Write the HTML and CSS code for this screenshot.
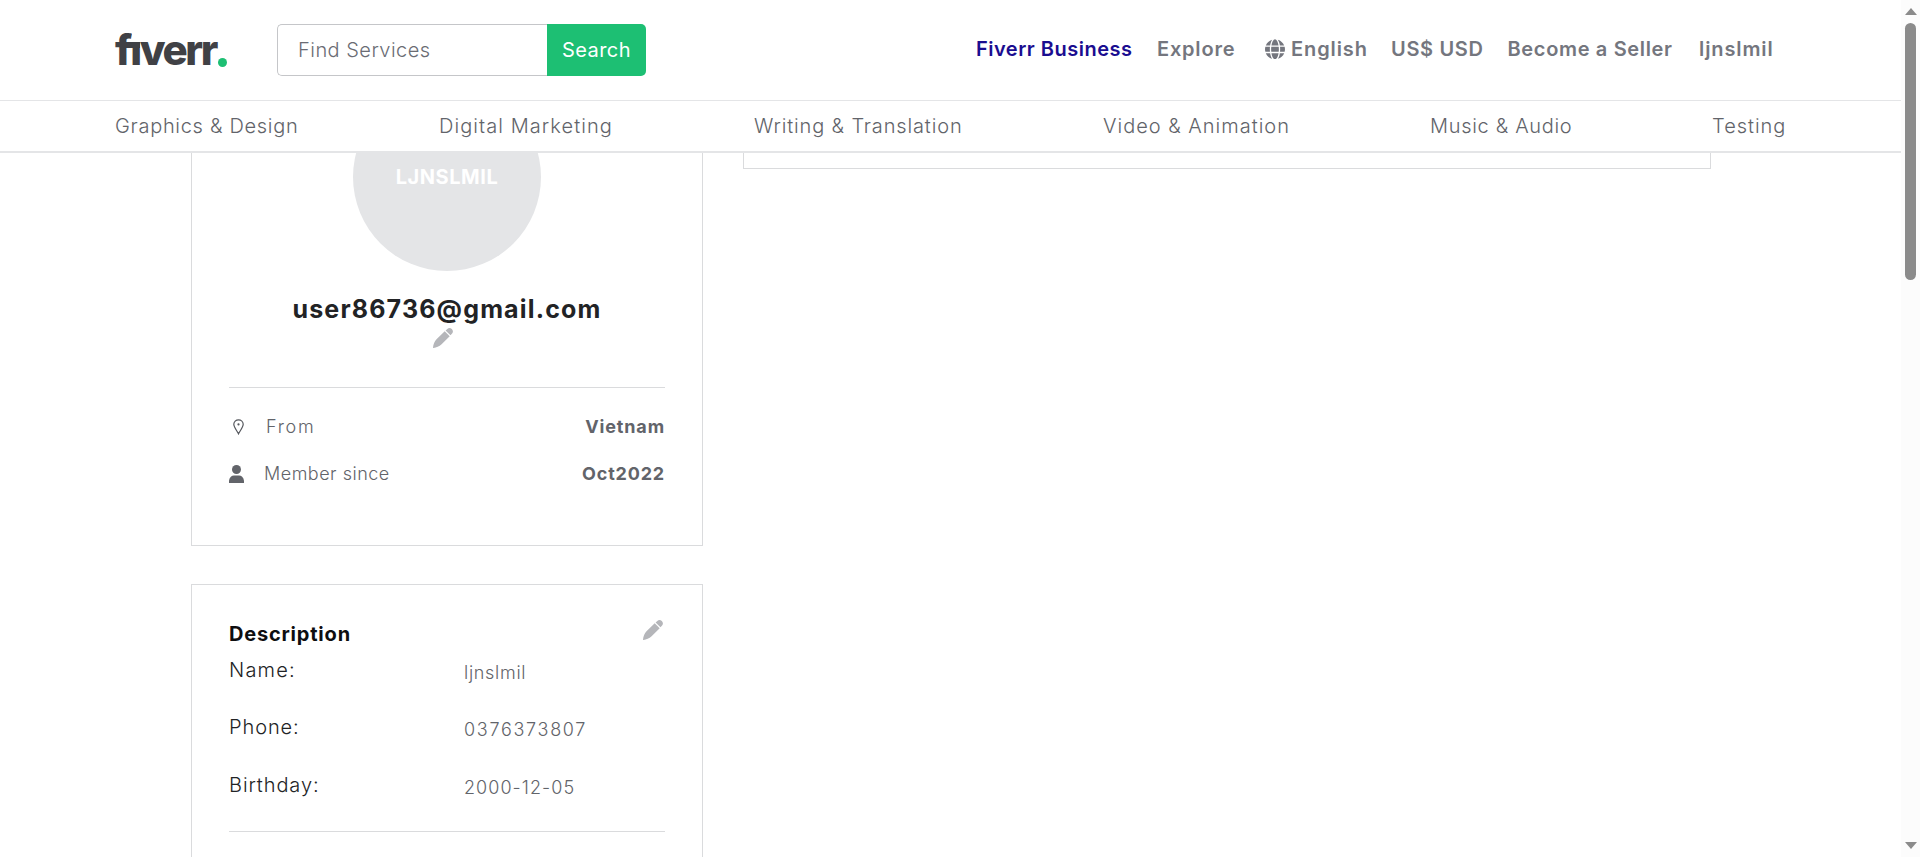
FILE: index.html
```
<!DOCTYPE html>
<html lang="en">
<head>
<meta charset="utf-8">
<title>Fiverr</title>
<link rel="stylesheet" href="styles.css">
</head>
<body>
<svg width="0" height="0" class="defs">
  <symbol id="pencil" viewBox="0 0 20 20">
    <path d="M11.700 3.200 16.700 8.200 8.600 16.300C6.300 18.500 3.200 19.700.6 20 .2 20 0 19.800 0 19.400.3 16.500 1.500 13.300 3.500 11.300ZM12.600 2.400 14.300.9C15.700-.3 17.500-.2 18.800 1.100 20.200 2.500 20.300 4.200 19.100 5.600L17.500 7.300Z"/>
  </symbol>
</svg>
<header class="header">
  <div class="topbar">
    <a class="logo">fiverr<span class="logo-dot"></span></a>
    <form class="search">
      <input class="search-input" type="text" placeholder="Find Services">
      <button class="search-button" type="button">Search</button>
    </form>
    <nav class="nav">
      <a class="business">Fiverr Business</a>
      <a class="explore">Explore</a>
      <a class="english"><svg class="globe" viewBox="0 0 496 512"><path d="M336.500 160C322 70.700 287.800 8 248 8s-74 62.700-88.500 152h177zM152 256c0 22.200 1.200 43.500 3.300 64h185.300c2.100-20.500 3.300-41.800 3.300-64s-1.200-43.500-3.300-64H155.300c-2.100 20.500-3.300 41.800-3.300 64zm324.700-96c-28.600-67.900-86.500-120.400-158-141.600 24.400 33.800 41.200 84.700 50 141.600h108zM177.200 18.400C105.800 39.600 47.800 92.100 19.300 160h108c8.700-56.900 25.500-107.800 49.900-141.600zM487.400 192H372.700c2.100 21 3.300 42.500 3.300 64s-1.200 43-3.300 64h114.600c5.500-20.500 8.600-41.800 8.600-64s-3.100-43.500-8.500-64zM120 256c0-21.500 1.200-43 3.300-64H8.600C3.200 212.500 0 233.800 0 256s3.200 43.500 8.600 64h114.600c-2-21-3.200-42.500-3.200-64zm39.500 96c14.500 89.300 48.700 152 88.500 152s74-62.700 88.500-152h-177zm159.300 141.600c71.400-21.200 129.400-73.700 158-141.600h-108c-8.800 56.900-25.600 107.800-50 141.600zM19.300 352c28.600 67.900 86.500 120.400 158 141.600-24.400-33.800-41.200-84.700-50-141.600h-108z"/></svg>English</a>
      <a class="currency">US$ USD</a>
      <a class="seller">Become a Seller</a>
      <a class="account">ljnslmil</a>
    </nav>
  </div>
  <nav class="categories">
    <a class="cat-graphics">Graphics &amp; Design</a>
    <a class="cat-digital">Digital Marketing</a>
    <a class="cat-writing">Writing &amp; Translation</a>
    <a class="cat-video">Video &amp; Animation</a>
    <a class="cat-music">Music &amp; Audio</a>
    <a class="cat-testing">Testing</a>
  </nav>
</header>
<main class="main">
  <div class="sidebar">
    <section class="card profile">
      <div class="avatar">LJNSLMIL</div>
      <div class="email">user86736@gmail.com</div>
      <svg class="pencil pencil-center"><use href="#pencil"/></svg>
      <div class="stats">
        <div class="stat">
          <svg class="pin" viewBox="0 0 11 16"><path d="M5.500 14.800C4.500 12.500.8 8.300.8 5.300a4.700 4.500 0 0 1 9.400 0C10.200 8.300 6.500 12.500 5.500 14.800Z"/><circle cx="5.500" cy="5.400" r=".5"/></svg>
          <span class="from">From</span><b class="country">Vietnam</b>
        </div>
        <div class="stat">
          <svg class="person" viewBox="0 0 15 18"><circle cx="7.500" cy="4.500" r="4.500"/><path d="M0 18V15.500C.6 12 2.700 10.500 5 10.500H10C12.300 10.500 14.400 12 15 15.500V18Z"/></svg>
          <span class="member">Member since</span><b class="joined">Oct2022</b>
        </div>
      </div>
    </section>
    <section class="card details">
      <div class="details-head"><h3 class="title">Description</h3><svg class="pencil"><use href="#pencil"/></svg></div>
      <div class="row"><span class="label label-name">Name:</span><span class="value value-name">ljnslmil</span></div>
      <div class="row"><span class="label label-phone">Phone:</span><span class="value value-phone">0376373807</span></div>
      <div class="row row-last"><span class="label label-birthday">Birthday:</span><span class="value value-birthday">2000-12-05</span></div>
      <div class="rule"></div>
    </section>
  </div>
  <section class="panel"></section>
</main>
<div class="scrollbar"><span class="arrow-up"></span><span class="thumb"></span><span class="arrow-down"></span></div>
</body>
</html>
```
FILE: styles.css
```
* { box-sizing: border-box; }
body {
  margin: 0;
  height: 857px;
  overflow: hidden;
  display: grid;
  grid-template: 153px 704px / 1901px 19px;
  background: #fff;
  font-family: Inter, "Open Sans", sans-serif;
  font-size: 20px;
  white-space: nowrap;
}
.defs { position: absolute; }

.header {
  position: relative;
  z-index: 1;
  background: #fff;
  color: #62646a;
  border-bottom: 2px solid #e4e5e7;
}
.topbar {
  display: flex;
  align-items: center;
  height: 101px;
  padding-left: 115px;
  border-bottom: 1px solid #e4e5e7;
}
.logo {
  position: relative;
  display: flex;
  width: 162px;
  font-size: 42px;
  font-weight: 800;
  line-height: 50px;
  letter-spacing: -2.4px;
  color: #404145;
}
/* covers the dot of the i, then carries the f crossbar across to it */
.logo::before {
  content: "";
  position: absolute;
  left: 17px;
  top: 5px;
  width: 10px;
  height: 12px;
  background: #fff;
}
.logo::after {
  content: "";
  position: absolute;
  left: 8px;
  top: 17px;
  width: 17px;
  height: 6px;
  background: #404145;
}
.logo-dot {
  width: 9px;
  height: 9px;
  margin: 33px 0 0 2px;
  border-radius: 50%;
  background: #1dbf73;
}
.search { display: flex; width: 369px; height: 52px; }
.search-input {
  width: 270px;
  padding: 0 0 0 20px;
  border: 1px solid #c5c6c9;
  border-right: 0;
  border-radius: 5px 0 0 5px;
  font: 300 20px Inter, sans-serif;
  letter-spacing: .47px;
}
.search-input::placeholder { color: #6a6c74; opacity: 1; }
.search-button {
  width: 99px;
  padding: 0;
  border: 0;
  border-radius: 0 5px 5px 0;
  background: #1dbf73;
  color: #fff;
  font: 400 20px Inter, sans-serif;
  letter-spacing: .45px;
}
.nav {
  display: grid;
  grid-template-columns: 181px 107px 127px 116.500px 191.500px 80px;
  margin-left: 330px;
  padding-bottom: 2px;
  font-weight: 600;
  color: #74767e;
}
.business { color: #1a0d90; letter-spacing: .5px; }
.explore { letter-spacing: .8px; }
.english { display: flex; align-items: center; letter-spacing: .9px; }
.globe { width: 20px; height: 20.600px; margin: 0 6px 0 1px; fill: #74767e; }
.currency { letter-spacing: .67px; }
.seller { letter-spacing: .66px; }
.account { letter-spacing: .9px; }
.categories {
  display: grid;
  grid-template-columns: 324px 315px 349px 327px 282px auto;
  align-items: center;
  height: 50px;
  padding-left: 115px;
  font-weight: 300;
}
.cat-graphics { letter-spacing: .7px; }
.cat-digital { letter-spacing: 1.07px; }
.cat-writing { letter-spacing: .85px; }
.cat-video { letter-spacing: 1px; }
.cat-music { letter-spacing: .68px; }
.cat-testing { letter-spacing: .98px; }

.main {
  grid-row: 2;
  display: flex;
  align-items: flex-start;
  gap: 40px;
  padding-left: 191px;
}
.sidebar { width: 512px; margin-top: -108px; }
.card { border: 1px solid #dadbdd; padding: 37px; }
.profile { height: 501px; margin-bottom: 38px; }
.avatar {
  width: 188px;
  height: 188px;
  margin: 0 auto;
  border-radius: 50%;
  background: #e4e5e7;
  color: #fff;
  font-weight: 700;
  line-height: 188px;
  letter-spacing: .54px;
  text-align: center;
}
.email {
  margin-top: 23px;
  font-size: 25px;
  font-weight: 700;
  line-height: 30px;
  letter-spacing: 1.17px;
  text-align: center;
  color: #222325;
}
.pencil { width: 20px; height: 20px; fill: #b5b6ba; }
.pencil-center { display: block; margin: 4px auto 0 204px; }
.stats {
  margin-top: 39px;
  padding-top: 15px;
  border-top: 1px solid #dadbdd;
  font-size: 18px;
  color: #62646a;
}
.stat { display: flex; align-items: center; height: 47px; font-weight: 300; }
.stat b { margin: 0 0 0 auto; font-weight: 700; }
.pin { width: 11px; height: 16px; margin: 0 22.500px 0 3.500px; fill: none; stroke: #55575d; stroke-width: 1.2; }
.person { width: 15px; height: 18px; margin-right: 20px; fill: #62646a; }
.from { letter-spacing: 1.7px; }
.country { letter-spacing: .88px; }
.member { letter-spacing: .5px; }
.joined { letter-spacing: .82px; }

.details { height: 273px; padding: 34px 37px 0; border-bottom: 0; }
.details-head { display: flex; justify-content: space-between; }
.details-head .pencil { margin: 1px 2px 0 0; }
.title {
  margin: 0;
  font-size: 20px;
  font-weight: 700;
  line-height: 30px;
  letter-spacing: .8px;
  color: #0e0e10;
}
.row { display: flex; height: 57px; font-weight: 300; }
.row-last { height: 56px; margin-top: 1px; }
.label { width: 235px; line-height: 42px; color: #222325; }
.label-name { letter-spacing: 1.2px; }
.label-phone { letter-spacing: .9px; }
.label-birthday { letter-spacing: .9px; }
.value { font-size: 18px; line-height: 47px; color: #62646a; }
.value-name { letter-spacing: .7px; }
.value-phone { letter-spacing: 1.7px; }
.value-birthday { letter-spacing: 1.05px; }
.rule { margin-top: 11px; border-top: 1px solid #dadbdd; }

.panel {
  width: 968px;
  height: 16px;
  border: solid #dadbdd;
  border-width: 0 1px 1px;
}

.scrollbar {
  grid-area: 1 / 2 / 3 / 3;
  display: flex;
  flex-direction: column;
  align-items: center;
  padding: 8px 0;
  background: #fcfcfc;
}
.arrow-up, .arrow-down { border: solid transparent; border-width: 0 6.500px; }
.arrow-up { border-bottom: 7px solid #8b8b8b; }
.arrow-down { margin-top: auto; border-top: 7px solid #8b8b8b; }
.thumb { width: 11px; height: 257px; margin-top: 8px; border-radius: 6px; background: #8b8b8b; }
```
